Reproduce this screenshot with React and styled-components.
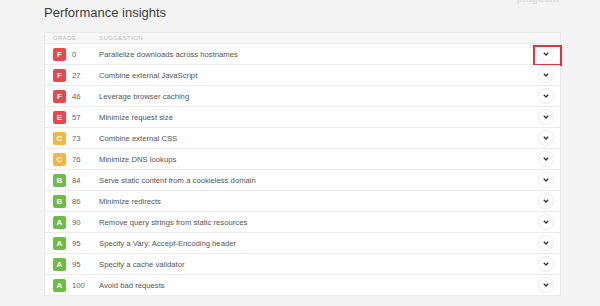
import styled, { createGlobalStyle } from "styled-components";

const GlobalStyle = createGlobalStyle`
  html, body {
    margin: 0;
    padding: 0;
    background: #f4f4f4;
    font-family: "Liberation Sans", Arial, sans-serif;
  }
`;

const insights = [
  { grade: "F", score: 0, text: "Parallelize downloads across hostnames", flagged: true },
  { grade: "F", score: 27, text: "Combine external JavaScript" },
  { grade: "F", score: 46, text: "Leverage browser caching" },
  { grade: "E", score: 57, text: "Minimize request size" },
  { grade: "C", score: 73, text: "Combine external CSS" },
  { grade: "C", score: 76, text: "Minimize DNS lookups" },
  { grade: "B", score: 84, text: "Serve static content from a cookieless domain" },
  { grade: "B", score: 86, text: "Minimize redirects" },
  { grade: "A", score: 90, text: "Remove query strings from static resources" },
  { grade: "A", score: 95, text: "Specify a Vary: Accept-Encoding header" },
  { grade: "A", score: 95, text: "Specify a cache validator" },
  { grade: "A", score: 100, text: "Avoid bad requests" },
];

const gradeColors = {
  A: "#6dbd45",
  B: "#6dbd45",
  C: "#f4b547",
  E: "#e9474f",
  F: "#e9474f",
};

const Page = styled.div`
  width: 600px;
  height: 306px;
  padding: 0 39px 0 44px;
  box-sizing: border-box;
  overflow: hidden;
`;

const Header = styled.div`
  display: flex;
  justify-content: space-between;
  align-items: flex-start;
  height: 32px;
`;

const Title = styled.h2`
  margin: 5px 0 0;
  font-size: 13px;
  line-height: 16px;
  font-weight: normal;
  color: #3d3d3d;
`;

const Logo = styled.span`
  margin-top: -7px;
  margin-right: 2px;
  font-size: 10px;
  color: #dcdcdc;
  font-weight: bold;
`;

const Table = styled.div`
  border: 1px solid #e9e9e9;
  border-bottom: none;
  background: #fff;
`;

const Row = styled.div`
  position: relative;
  display: grid;
  grid-template-columns: 19px 27px 1fr 28px;
  align-items: center;
  height: ${(p) => (p.$head ? "10px" : "20px")};
  padding-left: 8px;
  border-bottom: 1px solid #ececec;
  background: ${(p) => (p.$head ? "#f7f7f7" : "#fff")};
`;

const HeadCell = styled.span`
  grid-column: ${(p) => p.$span || "auto"};
  font-size: 6px;
  letter-spacing: 0.4px;
  color: #bdbdbd;
  text-transform: uppercase;
`;

const Badge = styled.span`
  display: flex;
  align-items: center;
  justify-content: center;
  width: 13px;
  height: 13px;
  border-radius: 2px;
  background: ${(p) => gradeColors[p.$grade]};
  color: #fff;
  font-size: 8px;
  font-weight: bold;
`;

const Score = styled.span`
  font-size: 7.7px;
  color: #666;
`;

const Suggestion = styled.span`
  font-size: 7.7px;
  color: #555;
`;

const Toggle = styled.button`
  justify-self: center;
  display: flex;
  align-items: center;
  justify-content: center;
  width: 16px;
  height: 16px;
  padding: 0;
  border-radius: 50%;
  border: 1px solid #efefef;
  background: #fff;
  box-shadow: 0 0 1px rgba(0, 0, 0, 0.05);
`;

const Flag = styled.span`
  position: absolute;
  top: 1px;
  right: -2px;
  width: 29px;
  height: 21px;
  box-sizing: border-box;
  border: 2px solid #e0343b;
  pointer-events: none;
`;

const Chevron = () => (
  <svg width="6" height="4" viewBox="0 0 6 4">
    <path d="M0.8 0.8 L3 3 L5.2 0.8" fill="none" stroke="#333" strokeWidth="1.3" />
  </svg>
);

const App = () => {
  return (
    <Page>
      <GlobalStyle />
      <Header>
        <Title>Performance insights</Title>
        <Logo>pingdom</Logo>
      </Header>
      <Table>
        <Row $head>
          <HeadCell $span="1 / 3">Grade</HeadCell>
          <HeadCell>Suggestion</HeadCell>
        </Row>
        {insights.map((item) => (
          <Row key={item.text}>
            <Badge $grade={item.grade}>{item.grade}</Badge>
            <Score>{item.score}</Score>
            <Suggestion>{item.text}</Suggestion>
            <Toggle>
              <Chevron />
            </Toggle>
            {item.flagged && <Flag />}
          </Row>
        ))}
      </Table>
    </Page>
  );
};

export default App;
